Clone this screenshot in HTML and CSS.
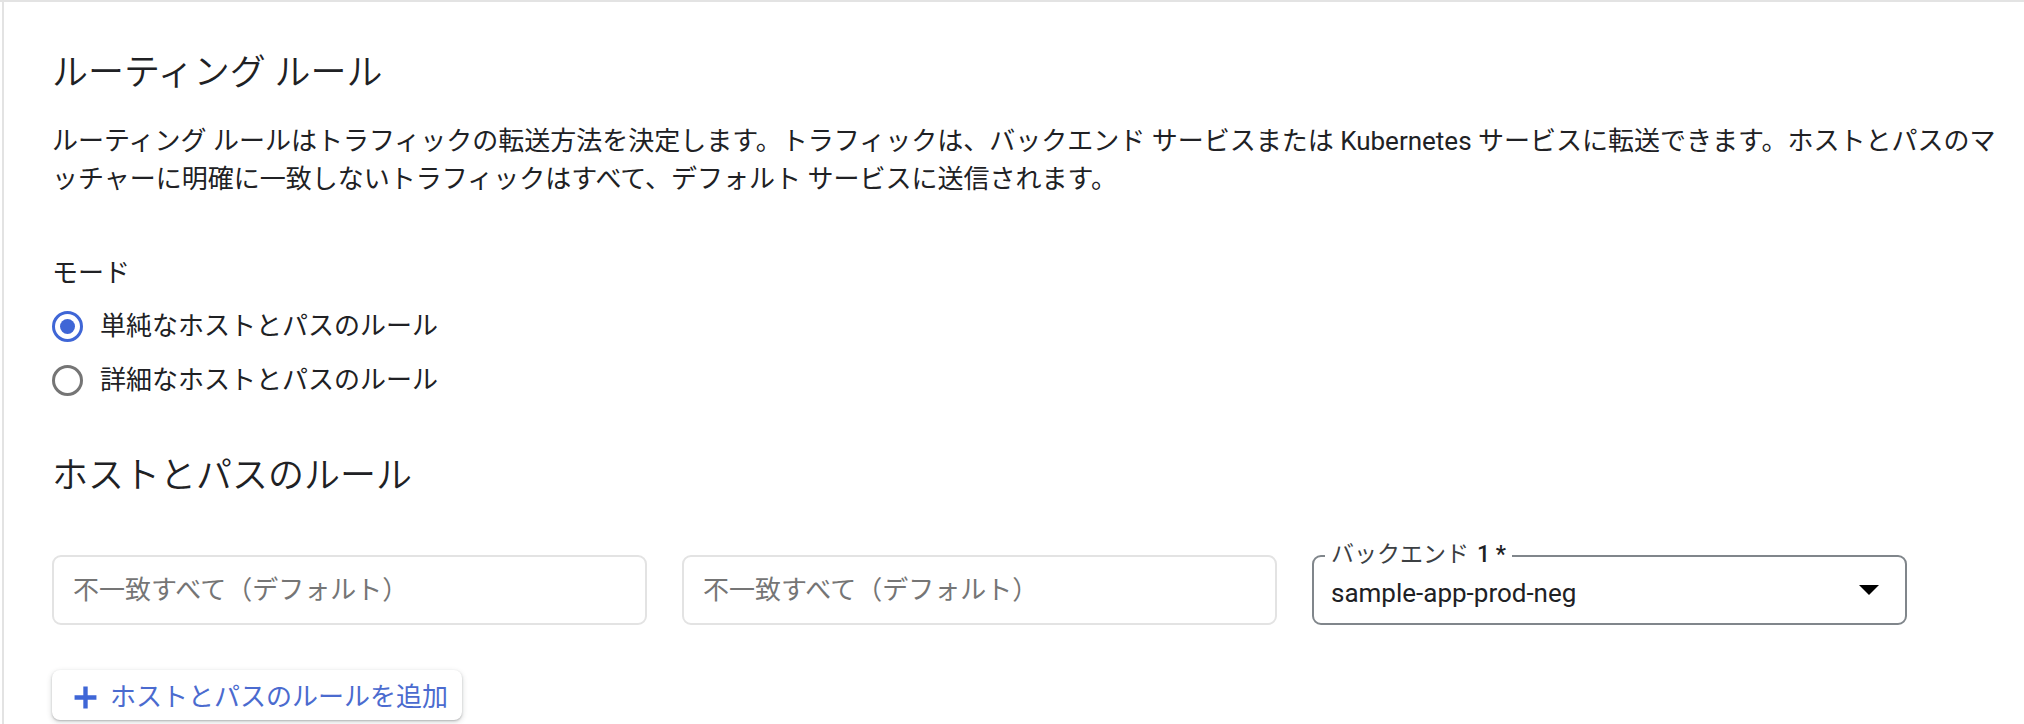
FILE: index.html
```html
<!DOCTYPE html>
<html lang="ja">
<head>
<meta charset="utf-8">
<title>ルーティング ルール</title>
<link rel="stylesheet" href="styles.css">
</head>
<body>
<div class="page">
  <section class="panel">
    <h1 class="title">ルーティング ルール</h1>
    <p class="desc">ルーティング ルールはトラフィックの転送方法を決定します。トラフィックは、バックエンド サービスまたは Kubernetes サービスに転送できます。ホストとパスのマッチャーに明確に一致しないトラフィックはすべて、デフォルト サービスに送信されます。</p>

    <div class="mode-label">モード</div>
    <div class="radio-group">
      <div class="radio-row">
        <span class="radio checked"><span class="dot"></span></span>
        <span class="radio-text">単純なホストとパスのルール</span>
      </div>
      <div class="radio-row">
        <span class="radio"></span>
        <span class="radio-text">詳細なホストとパスのルール</span>
      </div>
    </div>

    <h2 class="title sub">ホストとパスのルール</h2>

    <div class="fields">
      <div class="field"><span class="placeholder">不一致すべて（デフォルト）</span></div>
      <div class="field"><span class="placeholder">不一致すべて（デフォルト）</span></div>
      <div class="field select">
        <span class="float-label">バックエンド<span class="req">1 *</span></span>
        <span class="value">sample-app-prod-neg</span>
        <span class="arrow"></span>
      </div>
    </div>

    <button class="add-btn" type="button">
      <svg class="plus" viewBox="0 0 24 24" width="24" height="24" aria-hidden="true"><path d="M12 1.5v21M1.5 12h21" stroke="currentColor" stroke-width="4.2" fill="none"/></svg>
      <span>ホストとパスのルールを追加</span>
    </button>
  </section>
</div>
</body>
</html>
```
FILE: styles.css
```css
html, body {
  margin: 0;
  padding: 0;
  background: #ffffff;
}
body {
  height: 724px;
  overflow: hidden;
  font-family: Roboto, "Noto Sans CJK JP", sans-serif;
  color: #202124;
}
.page {
  border-top: 2px solid #e3e3e3;
}
.panel {
  margin-left: 2px;
  border-left: 2px solid #e3e3e3;
  padding: 49px 8px 0 48px;
  height: 722px;
  box-sizing: border-box;
}
.title {
  margin: 0;
  font-size: 36px;
  line-height: 44px;
  font-weight: 350;
  color: #202124;
}
.desc {
  margin: 27px 0 0;
  font-size: 26px;
  line-height: 38px;
  line-break: loose;
  color: #202124;
}
.mode-label {
  margin-top: 57px;
  font-size: 26px;
  line-height: 36px;
}
.radio-group {
  margin-top: 8px;
}
.radio-row {
  display: flex;
  align-items: center;
  height: 54px;
  gap: 17px;
}
.radio {
  width: 31px;
  height: 31px;
  box-sizing: border-box;
  border: 3px solid #757575;
  border-radius: 50%;
  display: flex;
  align-items: center;
  justify-content: center;
  flex: none;
}
.radio.checked {
  border-color: #3f66d6;
}
.dot {
  width: 15px;
  height: 15px;
  border-radius: 50%;
  background: #3f66d6;
}
.radio-text {
  font-size: 26px;
  line-height: 36px;
}
.sub {
  margin-top: 47px;
}
.fields {
  margin-top: 57px;
  display: grid;
  grid-template-columns: 595px 595px 595px;
  column-gap: 35px;
}
.field {
  position: relative;
  height: 70px;
  box-sizing: border-box;
  border: 2px solid #e3e3e3;
  border-radius: 9px;
  display: flex;
  align-items: center;
  padding: 0 18px 0 19px;
  font-size: 26px;
}
.placeholder {
  color: #757575;
  line-height: 36px;
}
.select {
  border-color: #80868b;
  padding: 0 26px 0 17px;
}
.float-label {
  position: absolute;
  top: -14px;
  left: 11px;
  padding: 0 6px;
  background: #ffffff;
  font-size: 23px;
  line-height: 24px;
  color: #3c4043;
}
.req {
  margin-left: 8px;
  font-weight: 500;
  color: #202124;
}
.value {
  flex: 1;
  padding-top: 5px;
  line-height: 36px;
  color: #202124;
}
.arrow {
  width: 0;
  height: 0;
  border-left: 10px solid transparent;
  border-right: 10px solid transparent;
  border-top: 10px solid #000000;
}
.add-btn {
  margin-top: 45px;
  height: 50px;
  display: flex;
  align-items: center;
  gap: 12px;
  padding: 4px 14px 0 21px;
  border: none;
  border-radius: 8px;
  background: #ffffff;
  box-shadow: 0 1px 2px rgba(60, 64, 67, 0.3), 0 2px 5px 1px rgba(60, 64, 67, 0.15);
  font-family: Roboto, "Noto Sans CJK JP", sans-serif;
  font-size: 26px;
  line-height: 36px;
  color: #4b6bcf;
}
.plus {
  width: 25px;
  height: 25px;
  color: #3f66d6;
  flex: none;
}
```
